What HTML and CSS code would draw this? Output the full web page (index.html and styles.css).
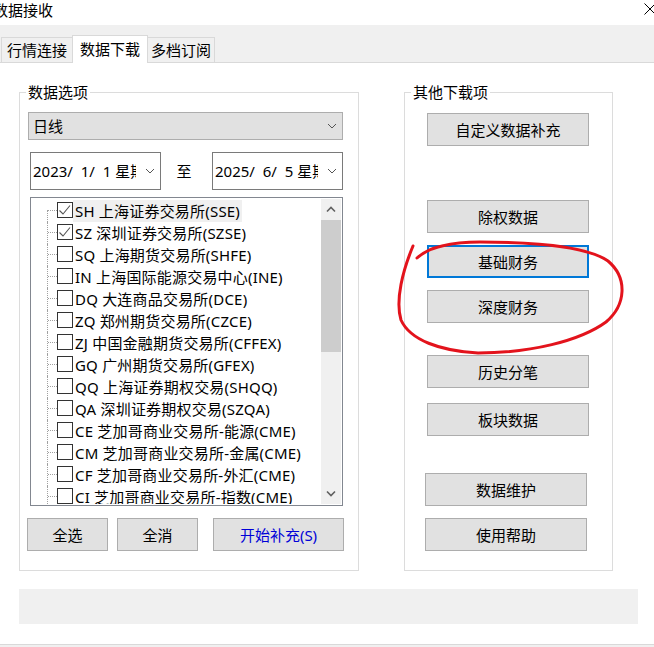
FILE: index.html
```html
<!DOCTYPE html>
<html lang="zh-CN">
<head>
    <meta charset="UTF-8">
    <meta name="viewport" content="width=device-width, initial-scale=1.0">
    <title>数据接收</title>
    <link rel="stylesheet" href="styles.css">
</head>
<body>
    <div class="titlebar">
        <div class="title">数据接收</div>
        <svg class="close" width="12" height="12" viewBox="0 0 12 12">
            <path d="M0.5 0.5 L11.5 11.5 M11.5 0.5 L0.5 11.5" stroke="#000" stroke-width="1" fill="none"/>
        </svg>
    </div>

    <div class="tabs">
        <div class="tab tab-1">行情连接</div>
        <div class="tab tab-2 active">数据下载</div>
        <div class="tab tab-3">多档订阅</div>
    </div>

    <div class="main">
        <div class="groups">
            <div class="group group-left">
                <div class="legend">数据选项</div>

                <div class="combo">
                    <span>日线</span>
                    <svg width="10" height="6" viewBox="0 0 10 6"><path d="M1 1 L5 5 L9 1" stroke="#555" stroke-width="1" fill="none"/></svg>
                </div>

                <div class="dates">
                    <div class="date">
                        <span class="date-text">2023/&nbsp;&nbsp;1/&nbsp;&nbsp;1 星期日</span>
                        <svg class="date-arrow" width="10" height="6" viewBox="0 0 10 6"><path d="M1 1 L5 5 L9 1" stroke="#555" stroke-width="1" fill="none"/></svg>
                    </div>
                    <div class="to">至</div>
                    <div class="date date-end">
                        <span class="date-text">2025/&nbsp;&nbsp;6/&nbsp;&nbsp;5 星期四</span>
                        <svg class="date-arrow" width="10" height="6" viewBox="0 0 10 6"><path d="M1 1 L5 5 L9 1" stroke="#555" stroke-width="1" fill="none"/></svg>
                    </div>
                </div>

                <div class="listbox">
                    <div class="items">
                        <div class="item"><span class="branch first"></span><span class="check"><svg width="14" height="14" viewBox="0 0 14 14"><path d="M1.5 7.5 L5 11 L12 2.5" stroke="#555" stroke-width="1.1" fill="none"/></svg></span><span class="label sel">SH 上海证券交易所(SSE)</span></div>
                        <div class="item"><span class="branch"></span><span class="check"><svg width="14" height="14" viewBox="0 0 14 14"><path d="M1.5 7.5 L5 11 L12 2.5" stroke="#555" stroke-width="1.1" fill="none"/></svg></span><span class="label">SZ 深圳证券交易所(SZSE)</span></div>
                        <div class="item"><span class="branch"></span><span class="check"></span><span class="label">SQ 上海期货交易所(SHFE)</span></div>
                        <div class="item"><span class="branch"></span><span class="check"></span><span class="label">IN 上海国际能源交易中心(INE)</span></div>
                        <div class="item"><span class="branch"></span><span class="check"></span><span class="label">DQ 大连商品交易所(DCE)</span></div>
                        <div class="item"><span class="branch"></span><span class="check"></span><span class="label">ZQ 郑州期货交易所(CZCE)</span></div>
                        <div class="item"><span class="branch"></span><span class="check"></span><span class="label">ZJ 中国金融期货交易所(CFFEX)</span></div>
                        <div class="item"><span class="branch"></span><span class="check"></span><span class="label">GQ 广州期货交易所(GFEX)</span></div>
                        <div class="item"><span class="branch"></span><span class="check"></span><span class="label">QQ 上海证券期权交易(SHQQ)</span></div>
                        <div class="item"><span class="branch"></span><span class="check"></span><span class="label">QA 深圳证券期权交易(SZQA)</span></div>
                        <div class="item"><span class="branch"></span><span class="check"></span><span class="label">CE 芝加哥商业交易所-能源(CME)</span></div>
                        <div class="item"><span class="branch"></span><span class="check"></span><span class="label">CM 芝加哥商业交易所-金属(CME)</span></div>
                        <div class="item"><span class="branch"></span><span class="check"></span><span class="label">CF 芝加哥商业交易所-外汇(CME)</span></div>
                        <div class="item"><span class="branch"></span><span class="check"></span><span class="label">CI 芝加哥商业交易所-指数(CME)</span></div>
                    </div>
                    <div class="scrollbar">
                        <div class="sb-btn"><svg width="10" height="7" viewBox="0 0 10 7"><path d="M1 5.5 L5 1.5 L9 5.5" stroke="#606060" stroke-width="1.6" fill="none"/></svg></div>
                        <div class="thumb"></div>
                        <div class="track"></div>
                        <div class="sb-btn"><svg width="10" height="7" viewBox="0 0 10 7"><path d="M1 1.5 L5 5.5 L9 1.5" stroke="#606060" stroke-width="1.6" fill="none"/></svg></div>
                    </div>
                </div>

                <div class="actions">
                    <button class="btn btn-sm">全选</button>
                    <button class="btn btn-sm btn-none">全消</button>
                    <button class="btn btn-start">开始补充(S)</button>
                </div>
            </div>

            <div class="group group-right">
                <div class="legend">其他下载项</div>
                <button class="btn side b-custom">自定义数据补充</button>
                <button class="btn side b-xr">除权数据</button>
                <button class="btn side b-basic focus">基础财务</button>
                <button class="btn side b-deep">深度财务</button>
                <button class="btn side b-tick">历史分笔</button>
                <button class="btn side b-block">板块数据</button>
                <button class="btn side b-maint">数据维护</button>
                <button class="btn side b-help">使用帮助</button>
            </div>
        </div>

        <div class="status"></div>
    </div>

    <div class="footer"></div>

    <svg class="annot" width="654" height="647" viewBox="0 0 654 647">
        <path d="M413 246 C403 270 395 300 401 320 C410 340 440 351 478 353 C530 353 580 341 606 322 C626 305 628 278 608 261 C585 245 530 242 480 242 C455 242 430 246 417 258"
              stroke="#e3131c" stroke-width="3" fill="none" stroke-linecap="round"/>
    </svg>
</body>
</html>
```

FILE: styles.css
```css
* {
    box-sizing: border-box;
}

body {
    margin: 0;
    width: 654px;
    height: 647px;
    overflow: hidden;
    position: relative;
    background-color: #fff;
    color: #000;
    font-family: "Noto Sans", "Noto Sans CJK SC", sans-serif;
    font-size: 15px;
}

/* title bar */
.titlebar {
    height: 25px;
    display: flex;
    justify-content: space-between;
}

.title {
    margin-left: -7px;
    line-height: 21px;
}

.close {
    margin: 3px -2px 0 0;
}

/* tabs */
.tabs {
    height: 38px;
    background-color: #f0f0f0;
    border-bottom: 1px solid #d9d9d9;
    display: flex;
    align-items: flex-end;
    padding-left: 1px;
}

.tab {
    height: 25px;
    border: 1px solid #d9d9d9;
    border-bottom: 0;
    line-height: 24px;
    text-align: center;
}

.tab-1 { width: 72px; }
.tab-2 { width: 76px; margin-left: -1px; }
.tab-3 { width: 68px; margin-left: -1px; }

.tab.active {
    height: 28px;
    line-height: 26px;
    background-color: #fff;
    margin-bottom: -1px;
}

/* content */
.main {
    padding: 29px 0 0 19px;
}

.groups {
    display: flex;
    gap: 45px;
}

.group {
    border: 1px solid #dcdcdc;
    height: 479px;
}

.group-left { width: 340px; }
.group-right { width: 209px; }

.legend {
    width: max-content;
    margin: -11px 0 0 6px;
    padding: 0 2px;
    background-color: #fff;
    line-height: 20px;
}

.combo {
    margin: 10px 0 0 8px;
    width: 315px;
    height: 28px;
    background-color: #e1e1e1;
    border: 1px solid #adadad;
    display: flex;
    align-items: center;
    justify-content: space-between;
    padding: 0 5px 0 4px;
    line-height: 20px;
}

.dates {
    display: flex;
    align-items: center;
    margin: 12px 0 0 10px;
}

.date {
    width: 131px;
    height: 38px;
    border: 1px solid #7a7a7a;
    display: flex;
    align-items: center;
    padding-left: 2px;
}

.date-end {
    margin-left: 5px;
}

.date-text {
    width: 103px;
    overflow: hidden;
    white-space: nowrap;
    line-height: 20px;
}

.date-arrow {
    margin-left: 9px;
}

.to {
    width: 46px;
    text-align: center;
    line-height: 20px;
}

/* list with checkboxes */
.listbox {
    margin: 7px 0 0 10px;
    width: 313px;
    height: 309px;
    border: 1px solid #828790;
    padding: 1px;
    display: flex;
}

.items {
    flex: 1;
    overflow: hidden;
    padding: 1px 0 0 15px;
}

.item {
    display: flex;
    height: 22px;
    white-space: nowrap;
}

.branch {
    width: 10px;
    flex-shrink: 0;
    border-left: 1px dotted #a0a0a0;
    background-image: linear-gradient(to right, #a0a0a0 50%, transparent 50%);
    background-size: 2px 1px;
    background-repeat: repeat-x;
    background-position: 0 10px;
}

.branch.first {
    margin-top: 10px;
    background-position: 0 0;
}

.check {
    width: 16px;
    height: 16px;
    flex-shrink: 0;
    margin-top: 2px;
    border: 1px solid #333;
    background-color: #fff;
}

.check svg {
    display: block;
}

.label {
    padding: 0 2px;
    line-height: 22px;
    letter-spacing: 0.2px;
}

.label.sel {
    background-color: #f0f0f0;
}

.scrollbar {
    width: 20px;
    background-color: #f0f0f0;
    display: flex;
    flex-direction: column;
}

.sb-btn {
    height: 21px;
    display: flex;
    align-items: center;
    justify-content: center;
}

.thumb {
    height: 132px;
    background-color: #cdcdcd;
}

.track {
    flex: 1;
}

/* buttons */
.btn {
    height: 33px;
    padding: 0;
    background-color: #e1e1e1;
    border: 1px solid #adadad;
    border-radius: 0;
    font: inherit;
    color: #000;
    line-height: 20px;
}

.actions {
    display: flex;
    margin: 12px 0 0 7px;
}

.btn-sm { width: 81px; }
.btn-none { margin-left: 9px; }

.btn-start {
    width: 131px;
    margin-left: 15px;
    color: #0000d8;
}

.side {
    display: block;
    width: 162px;
    margin-left: 22px;
}

.b-custom { margin-top: 11px; }
.b-xr { margin-top: 54px; }
.b-basic { margin-top: 12px; }
.b-deep { margin-top: 12px; }
.b-tick { margin-top: 32px; }
.b-block { margin-top: 15px; }
.b-maint { margin-top: 37px; margin-left: 20px; }
.b-help { margin-top: 12px; margin-left: 20px; }

.btn.focus {
    border: 2px solid #0078d7;
}

.status {
    margin-top: 18px;
    width: 619px;
    height: 35px;
    background-color: #f0f0f0;
}

.footer {
    margin-top: 20px;
    height: 4px;
    border-top: 1px solid #d9d9d9;
    background-color: #f0f0f0;
}

/* hand-drawn marker over the buttons */
.annot {
    position: absolute;
    left: 0;
    top: 0;
    pointer-events: none;
}
```
